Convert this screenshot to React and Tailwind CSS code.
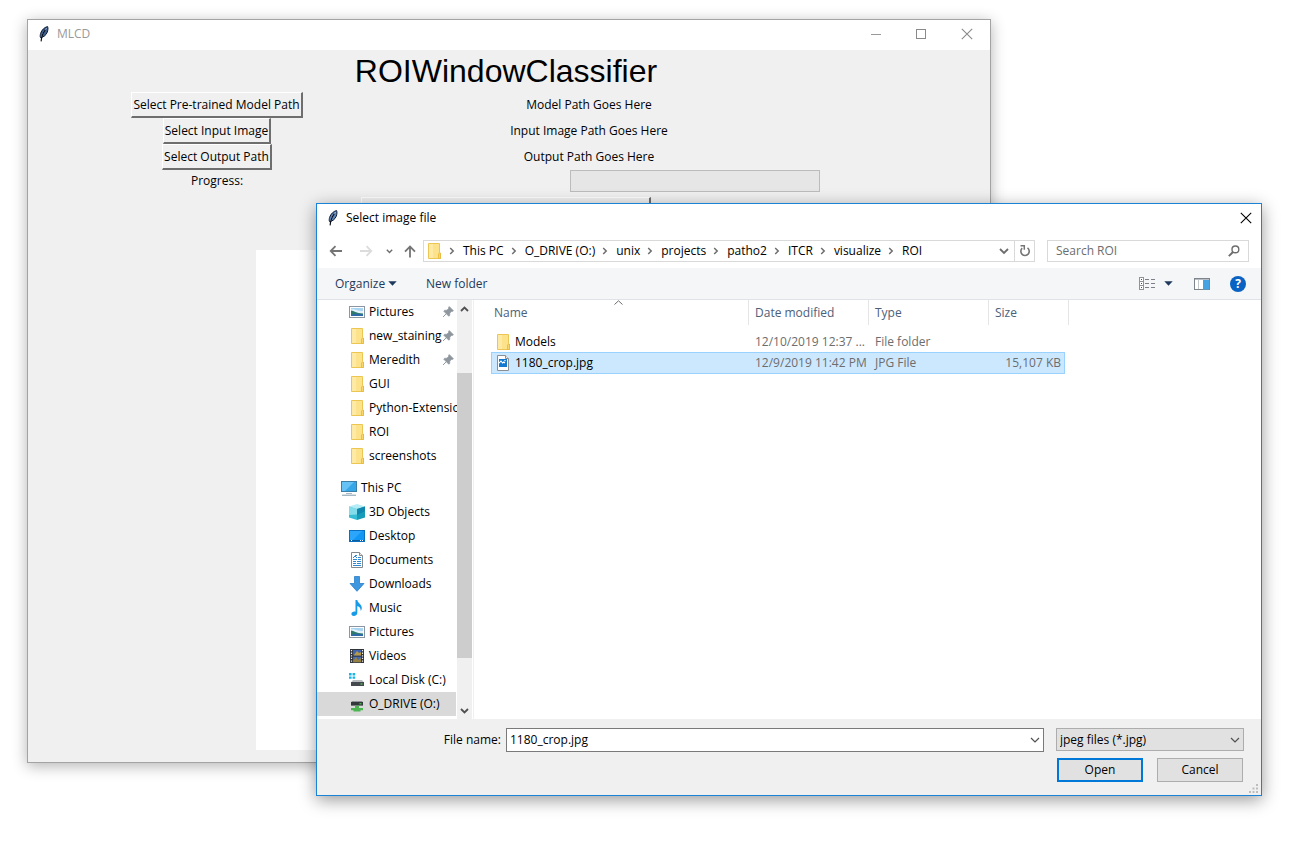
import React from "react";

function Feather({ active }) {
  return (
    <svg width="12" height="16" viewBox="0 0 12 16" className="shrink-0" aria-hidden="true">
      <path d="M9.6 0.6C6.6 1.2 3.6 4 2.6 7.4C2.2 9 2 10.4 2.5 11.6C5 11.4 8 9.4 9.2 6.4C10 4.2 10.2 2 9.6 0.6Z" fill={active ? "#5d86bd" : "#41618f"} stroke="#0c1a33" strokeWidth="1" />
      <path d="M8.6 2.2C6 5 4.6 8 3.6 11" stroke="#c3d6ee" strokeWidth="0.8" fill="none" />
      <path d="M7.4 3.6C5.2 6.6 3.4 10.4 3.1 15.4" stroke="#050b18" strokeWidth="1.1" fill="none" />
    </svg>
  );
}

function Folder() {
  return (
    <svg width="16" height="16" viewBox="0 0 16 16" className="shrink-0" aria-hidden="true">
      <path d="M2.5 0.5H13.5V9.5L14.5 10.5V15.5H2.5Z" fill="#fde28c" stroke="#ecc653" />
      <path d="M3 1H7V15H3Z" fill="#fee9a5" />
      <path d="M12.5 15.5V11L13.5 10H14.5V15.5Z" fill="#fbd669" stroke="#e3b73c" strokeWidth="0.8" />
    </svg>
  );
}

function PicturesIcon() {
  return (
    <svg width="16" height="16" viewBox="0 0 16 16" className="shrink-0" aria-hidden="true">
      <rect x="0.5" y="2.5" width="15" height="11" fill="#fff" stroke="#8b96a3" />
      <rect x="2" y="4" width="12" height="4" fill="#a9d4f2" />
      <path d="M2 5.5C5 4.5 7 7 14 7V10H2Z" fill="#e5f3fb" />
      <path d="M2 6.5C5 7 7 9 14 9.5V12H2Z" fill="#2f7a6c" />
      <path d="M2 10.5C6 9.5 10 9.5 14 10.5V12H2Z" fill="#2e6ba6" />
    </svg>
  );
}

function ThisPcIcon() {
  return (
    <svg width="16" height="16" viewBox="0 0 16 16" className="shrink-0" aria-hidden="true">
      <rect x="0.5" y="1.5" width="15" height="10" fill="#35a7e8" stroke="#3b7ea8" />
      <path d="M1 2H13L4 11H1Z" fill="#66c2f4" />
      <path d="M5 13.5H11" stroke="#a8b9c5" />
      <path d="M1 15.2H15" stroke="#7d98aa" />
    </svg>
  );
}

function CubeIcon() {
  return (
    <svg width="16" height="16" viewBox="0 0 16 16" className="shrink-0" aria-hidden="true">
      <path d="M0 2.6L8 0L16 2.6L8 5Z" fill="#b4edf5" />
      <path d="M0 2.6L8 5V16L0 13.4Z" fill="#35bdd4" />
      <path d="M8 5L16 2.6V13.4L8 16Z" fill="#169bb8" />
      <path d="M0 2.6L8 5V10.5L0 11Z" fill="#83dcea" />
      <path d="M8 5L16 2.6V7L8 11Z" fill="#0f86ad" />
    </svg>
  );
}

function DesktopIcon() {
  return (
    <svg width="16" height="16" viewBox="0 0 16 16" className="shrink-0" aria-hidden="true">
      <rect x="0.5" y="2.5" width="15" height="11" fill="#1296f3" stroke="#0b6fc0" />
      <path d="M1 3H13L4 12H1Z" fill="#2ba6fb" />
      <path d="M1 12.5H15" stroke="#0a5ca3" />
      <path d="M2 12.5H3M11 12.5H12M13 12.5H14" stroke="#fff" />
    </svg>
  );
}

function DocumentsIcon() {
  return (
    <svg width="16" height="16" viewBox="0 0 16 16" className="shrink-0" aria-hidden="true">
      <path d="M2.5 0.5H10.5L13.5 3.5V15.5H2.5Z" fill="#fff" stroke="#84898e" />
      <path d="M10.5 0.5V3.5H13.5" fill="#e8e8e8" stroke="#84898e" />
      <path d="M4 5.5H5M6 3.5H8M5 4.5H7M7 5.5H8M9 5.5H12M4 7.5H8M9 7.5H12M4 9.5H7M8 9.5H12M4 11.5H7M8 11.5H12M4 13.5H12" stroke="#2f88d4" />
    </svg>
  );
}

function DownloadsIcon() {
  return (
    <svg width="16" height="16" viewBox="0 0 16 16" className="shrink-0" aria-hidden="true">
      <path d="M5.5 0.5H10.5V7.5H15L8 15.3L1 7.5H5.5Z" fill="#3c96e0" stroke="#2a7fc8" strokeWidth="0.8" />
    </svg>
  );
}

function MusicIcon() {
  return (
    <svg width="16" height="16" viewBox="0 0 16 16" className="shrink-0" aria-hidden="true">
      <path d="M6.5 0H8.3C8.5 3 12.8 4 12.8 8C12.8 9.2 12.3 10.2 11.6 11C12 8.4 10.6 6.6 8.3 6V13C8.3 14.8 6.6 15.9 4.8 15.9C3.3 15.9 2.3 15 2.4 13.8C2.5 12.3 4.4 11.2 6.5 11.7Z" fill="#179be8" />
    </svg>
  );
}

function VideosIcon() {
  return (
    <svg width="16" height="16" viewBox="0 0 16 16" className="shrink-0" aria-hidden="true">
      <rect x="1" y="1" width="14" height="14" fill="#30343b" />
      <path d="M2.5 2V15M13.5 2V15" stroke="#e9ecef" strokeWidth="1.2" strokeDasharray="1.3 1.3" />
      <rect x="4" y="2" width="8" height="5.5" fill="#3f64ad" />
      <path d="M5 7L8 3L10 5L12 4V7.5H5Z" fill="#b79a49" />
      <rect x="4" y="8.7" width="8" height="5.5" fill="#4469b5" />
      <path d="M4 13L7 9L9 12L12 10V14.2H4Z" fill="#96803f" />
    </svg>
  );
}

function LocalDiskIcon() {
  return (
    <svg width="16" height="16" viewBox="0 0 16 16" className="shrink-0" aria-hidden="true">
      <path d="M0 1H2.6V3.4H0ZM3.6 1H6.2V3.4H3.6ZM0 4.4H2.6V6.8H0ZM3.6 4.4H6.2V6.8H3.6Z" fill="#19b3e6" />
      <path d="M4 8H13L15 10.5H2Z" fill="#b9bcbf" />
      <rect x="2" y="10" width="13" height="4" fill="#44494d" />
      <rect x="11.5" y="11.5" width="2" height="1" fill="#58e05e" />
    </svg>
  );
}

function NetworkDriveIcon() {
  return (
    <svg width="16" height="16" viewBox="0 0 16 16" className="shrink-0" aria-hidden="true">
      <path d="M3 5H13L14 6.5H2Z" fill="#8e9295" />
      <rect x="2" y="6" width="12" height="3.6" fill="#33383b" />
      <rect x="10.5" y="7.3" width="2" height="1" fill="#58e05e" />
      <path d="M6 9.8H10V12H14V14.2H11.5V15.6H4.5V14.2H2V12H6Z" fill="#4cb552" />
    </svg>
  );
}

function ImageFileIcon() {
  return (
    <svg width="14" height="16" viewBox="0 0 14 16" className="shrink-0" aria-hidden="true">
      <path d="M1.5 0.5H9.5L12.5 3.5V15.5H1.5Z" fill="#fff" stroke="#8b8f94" />
      <path d="M9.5 0.5V3.5H12.5" fill="#eee" stroke="#8b8f94" />
      <rect x="3" y="4" width="8" height="8" fill="#1478d0" />
      <path d="M3 8.2L5 6L6.6 8L7.8 7L9 8" stroke="#fff" strokeWidth="1.1" fill="none" />
      <rect x="8.4" y="5" width="1.2" height="1.2" fill="#fff" />
    </svg>
  );
}

function PinIcon() {
  return (
    <svg width="12" height="12" viewBox="0 0 12 12" className="shrink-0" aria-hidden="true">
      <path d="M7.2 0.6L11.4 4.8L10.2 5.4L9.2 5.4L7.8 7.2L7.6 9.6L6.8 10.2L4.3 7.7L1 11L4.3 7.7L1.8 5.2L2.4 4.4L4.8 4.2L6.6 2.8V1.8Z" fill="#8f979e" stroke="#8f979e" strokeWidth="0.8" />
    </svg>
  );
}

function Chevron({ className = "", d = "M1 1L5 5L9 1", w = 10, h = 6, stroke = 1.2 }) {
  return (
    <svg width={w} height={h} viewBox={`0 0 ${w} ${h}`} className={className} aria-hidden="true">
      <path d={d} fill="none" stroke="currentColor" strokeWidth={stroke} />
    </svg>
  );
}

function CloseIcon() {
  return (
    <svg width="12" height="12" viewBox="0 0 12 12" aria-hidden="true">
      <path d="M0.8 0.8L11.2 11.2M11.2 0.8L0.8 11.2" stroke="currentColor" strokeWidth="1.1" />
    </svg>
  );
}

function TkButton({ children }) {
  return (
    <button className="h-[26px] justify-self-center whitespace-nowrap border-t border-l border-r-2 border-b-2 border-t-white border-l-white border-r-[#6e6e6e] border-b-[#6e6e6e] bg-[#f0f0f0] px-px">
      {children}
    </button>
  );
}

function MainWindow() {
  return (
    <section aria-label="MLCD" className="absolute top-[19px] right-[299px] left-[27px] border border-[#a3a3a3] bg-[#f0f0f0] shadow-[0_3px_14px_rgba(0,0,0,0.3)]">
      <header className="flex h-[30px] items-center bg-white pb-0.5 pl-2.5 text-[#999]">
        <Feather />
        <span className="ml-[7px] flex-1">MLCD</span>
        <button aria-label="Minimize" className="grid h-full w-[46px] place-items-center">
          <svg width="12" height="12" viewBox="0 0 12 12" aria-hidden="true"><path d="M1 6.5H11" stroke="#999" /></svg>
        </button>
        <button aria-label="Maximize" className="grid h-full w-[45px] place-items-center">
          <svg width="12" height="12" viewBox="0 0 12 12" aria-hidden="true"><rect x="0.5" y="1.5" width="9" height="9" fill="none" stroke="#8a8a8a" /></svg>
        </button>
        <button aria-label="Close" className="grid h-full w-[46px] place-items-center text-[#8a8a8a]">
          <CloseIcon />
        </button>
      </header>
      <div className="grid grid-cols-[378fr_366fr_212fr] items-center pr-1.5 pb-3">
        <h1 className="col-span-3 h-[42px] text-center font-['Liberation_Sans',sans-serif] text-[32px] leading-[42px]">ROIWindowClassifier</h1>
        <TkButton>Select Pre-trained Model Path</TkButton>
        <p className="text-center">Model Path Goes Here</p>
        <span />
        <TkButton>Select Input Image</TkButton>
        <p className="text-center">Input Image Path Goes Here</p>
        <span />
        <TkButton>Select Output Path</TkButton>
        <p className="text-center">Output Path Goes Here</p>
        <span />
        <p className="text-center">Progress:</p>
        <div role="progressbar" aria-label="Progress" aria-valuenow={0} className="col-span-2 h-[22px] w-[250px] justify-self-center border border-[#bcbcbc] bg-[#e6e6e6]" />
        <button aria-label="Run" className="col-span-3 mt-[5px] mb-[27px] h-[26px] w-[290px] justify-self-center border-t border-l border-r-2 border-b-2 border-t-white border-l-white border-r-[#6e6e6e] border-b-[#6e6e6e]" />
        <div className="col-span-3 h-[500px] w-[500px] justify-self-center bg-white" />
      </div>
    </section>
  );
}

const crumbs = ["This PC", "O_DRIVE (O:)", "unix", "projects", "patho2", "ITCR", "visualize", "ROI"];

function NavBar() {
  return (
    <div className="flex h-[35px] items-center pt-px pr-3 pl-3 text-[#6d6d6d]">
      <button aria-label="Back" className="w-[15px]">
        <svg width="14" height="12" viewBox="0 0 14 12" aria-hidden="true"><path d="M13 6H2M6.5 1.2L1.7 6L6.5 10.8" fill="none" stroke="#747474" strokeWidth="1.8" /></svg>
      </button>
      <button aria-label="Forward" className="ml-[15px] w-[15px]">
        <svg width="14" height="12" viewBox="0 0 14 12" aria-hidden="true"><path d="M1 6H12M7.5 1.2L12.3 6L7.5 10.8" fill="none" stroke="#dcdcdc" strokeWidth="1.8" /></svg>
      </button>
      <button aria-label="Recent locations" className="ml-3 w-2">
        <Chevron w={7} h={5} d="M0.8 0.8L3.5 3.5L6.2 0.8" stroke={1.4} />
      </button>
      <button aria-label="Up" className="ml-[10px] w-[13px]">
        <svg width="12" height="13" viewBox="0 0 12 13" aria-hidden="true"><path d="M6 12.5V2M1 6.6L6 1.6L11 6.6" fill="none" stroke="#747474" strokeWidth="1.8" /></svg>
      </button>
      <div className="ml-[6px] flex h-[22px] flex-1 items-stretch border border-[#d9d9d9]">
        <nav aria-label="Address" className="flex flex-1 items-center pl-0.5 text-black">
          <Folder />
          {crumbs.map((c) => (
            <React.Fragment key={c}>
              <Chevron className="mr-2 ml-[7px] shrink-0 text-[#6d6d6d]" w={6} h={8} d="M1.2 1L4.2 4L1.2 7" stroke={1.5} />
              <button className="whitespace-nowrap">{c}</button>
            </React.Fragment>
          ))}
        </nav>
        <button aria-label="Previous locations" className="grid w-[20px] place-items-center">
          <Chevron w={10} h={7} d="M1 1L5 5L9 1" stroke={1.8} />
        </button>
        <button aria-label="Refresh" className="grid w-[20px] place-items-center border-l border-[#d9d9d9]">
          <svg width="12" height="12" viewBox="0 0 12 12" aria-hidden="true">
            <path d="M3.2 3.2A4.2 4.2 0 1 0 8.5 2.9" fill="none" stroke="#747474" strokeWidth="1.6" />
            <path d="M1.5 0.8H5.3V4.8" fill="none" stroke="#747474" strokeWidth="1.5" />
          </svg>
        </button>
      </div>
      <div className="ml-3 flex h-[22px] w-[202px] items-center border border-[#d9d9d9] pr-2 pl-2">
        <input aria-label="Search ROI" placeholder="Search ROI" className="min-w-0 flex-1 bg-transparent outline-none placeholder:text-[#6d6d6d]" />
        <svg width="12" height="12" viewBox="0 0 12 12" aria-hidden="true">
          <circle cx="7.4" cy="4.4" r="3.4" fill="none" stroke="#6d6d6d" strokeWidth="1.4" />
          <path d="M5 7L0.8 11.2" stroke="#6d6d6d" strokeWidth="1.9" />
        </svg>
      </div>
    </div>
  );
}

function Toolbar() {
  return (
    <div className="flex h-8 items-center border-b border-[#dfe3e8] bg-[#f5f6f7] pr-[15px] pl-[18px] text-[#1e395b]">
      <button className="flex w-[91px] items-center gap-[3px]">
        Organize
        <svg width="9" height="5" viewBox="0 0 9 5" aria-hidden="true"><path d="M0.3 0.3H8.7L4.5 4.8Z" fill="#1e395b" /></svg>
      </button>
      <button>New folder</button>
      <button aria-label="Change your view" className="ml-auto flex items-center gap-2">
        <svg width="17" height="13" viewBox="0 0 17 13" aria-hidden="true">
          <rect x="0.5" y="0.5" width="4" height="12" fill="#fff" stroke="#8d9399" />
          <path d="M1 4.5H4M1 8.5H4" stroke="#8d9399" />
          <path d="M2 2.5H3M2 6.5H3M2 10.5H3" stroke="#4a4f55" />
          <path d="M6 2.5H10M12 2.5H16M6 6.5H10M12 6.5H16M6 10.5H10M12 10.5H16" stroke="#7b8187" />
        </svg>
        <svg width="9" height="5" viewBox="0 0 9 5" aria-hidden="true"><path d="M0.3 0.3H8.7L4.5 4.8Z" fill="#1e395b" /></svg>
      </button>
      <button aria-label="Preview pane" className="ml-[21px]">
        <svg width="16" height="12" viewBox="0 0 16 12" aria-hidden="true">
          <rect x="0.5" y="0.5" width="15" height="11" fill="#fff" stroke="#7d848c" />
          <path d="M1 1.5H15" stroke="#b9bec4" />
          <path d="M4.5 2V11" stroke="#c3c8cd" />
          <rect x="9" y="2" width="6" height="9.5" fill="#45a3e3" />
        </svg>
      </button>
      <button aria-label="Help" className="ml-5 grid size-4 place-items-center rounded-full bg-[#0a63c2] font-bold text-white">?</button>
    </div>
  );
}

const quick = [
  ["Pictures", PicturesIcon, true],
  ["new_staining", Folder, true],
  ["Meredith", Folder, true],
  ["GUI", Folder],
  ["Python-Extensio", Folder],
  ["ROI", Folder],
  ["screenshots", Folder],
];

const places = [
  ["3D Objects", CubeIcon],
  ["Desktop", DesktopIcon],
  ["Documents", DocumentsIcon],
  ["Downloads", DownloadsIcon],
  ["Music", MusicIcon],
  ["Pictures", PicturesIcon],
  ["Videos", VideosIcon],
  ["Local Disk (C:)", LocalDiskIcon],
  ["O_DRIVE (O:)", NetworkDriveIcon],
];

function SideItem({ label, Icon, pinned, selected, root }) {
  return (
    <li className={selected ? "bg-[#d9d9d9]" : ""}>
      <button className={`flex h-6 w-full items-center gap-1 text-left ${root ? "pl-6" : "pl-8"}`}>
        <Icon />
        <span className="min-w-0 flex-1 whitespace-nowrap">{label}</span>
        {pinned && <span className="mr-0.5"><PinIcon /></span>}
      </button>
    </li>
  );
}

function Sidebar() {
  return (
    <div className="flex w-[157px] shrink-0 border-r border-[#f0f0f0]">
      <nav aria-label="Folders" className="w-[139px] pb-[3px]">
        <ul>
          {quick.map(([label, Icon, pinned]) => (
            <SideItem key={label} label={label} Icon={Icon} pinned={pinned} />
          ))}
        </ul>
        <ul className="mt-2">
          <SideItem label="This PC" Icon={ThisPcIcon} root />
          {places.map(([label, Icon]) => (
            <SideItem key={label} label={label} Icon={Icon} selected={label.startsWith("O_")} />
          ))}
        </ul>
      </nav>
      <div className="ml-px flex w-[15px] flex-col items-center bg-[#f0f0f0] text-[#505050]">
        <div className="grid h-[17px] place-items-center"><Chevron w={9} h={6} d="M1 5L4.5 1.5L8 5" stroke={1.8} /></div>
        <div className="mt-14 w-full flex-1 bg-[#cdcdcd]" />
        <div className="mt-[44px] grid h-[17px] place-items-center"><Chevron w={9} h={6} d="M1 1L4.5 4.5L8 1" stroke={1.8} /></div>
      </div>
    </div>
  );
}

function FileList() {
  const th = "h-[25px] border-r border-[#e5e5e5] pl-1.5 text-left font-normal";
  return (
    <div className="relative flex-1 pl-[17px]">
      <span className="absolute top-0 left-[140px] text-[#6d6d6d]"><Chevron w={9} h={5} d="M0.5 4.5L4.5 0.8L8.5 4.5" stroke={1} /></span>
      <table className="w-[578px] table-fixed border-separate border-spacing-0">
        <thead>
          <tr className="text-[#4c607a]">
            <th className="h-[25px] w-[258px] border-r border-[#e5e5e5] pl-[3px] text-left font-normal">Name</th>
            <th className={`${th} w-[120px]`}>Date modified</th>
            <th className={`${th} w-[120px]`}>Type</th>
            <th className="h-[25px] w-[76px] p-0 pl-1.5 text-left font-normal">Size</th>
            <th className="w-1 border-r border-[#e5e5e5] p-0" />
          </tr>
        </thead>
        <tbody className="text-[#6d6d6d]">
          <tr><td colSpan={5} className="h-[6px] p-0" /></tr>
          <tr>
            <td className="h-[21px] border-l border-transparent py-0 pl-[3px] text-black"><span className="flex items-center gap-1"><Folder />Models</span></td>
            <td className="pl-1.5 whitespace-nowrap">12/10/2019 12:37 ...</td>
            <td className="pl-1.5">File folder</td>
            <td className="p-0" />
            <td className="p-0" />
          </tr>
          <tr>
            <td className="h-[22px] border-y border-l border-[#99d1ff] bg-[#cce8ff] py-0 pl-1 text-black"><span className="flex items-center gap-[5px]"><ImageFileIcon />1180_crop.jpg</span></td>
            <td className="border-y border-[#99d1ff] bg-[#cce8ff] py-0 pl-1.5 whitespace-nowrap">12/9/2019 11:42 PM</td>
            <td className="border-y border-[#99d1ff] bg-[#cce8ff] py-0 pl-1.5">JPG File</td>
            <td className="border-y border-r border-[#99d1ff] bg-[#cce8ff] py-0 pr-[3px] text-right whitespace-nowrap">15,107 KB</td>
            <td className="p-0" />
          </tr>
        </tbody>
      </table>
    </div>
  );
}

function Footer() {
  return (
    <form className="relative bg-[#f0f0f0] pt-[9px] pb-[13px]" onSubmit={(e) => e.preventDefault()}>
      <div className="flex pr-[17px]">
        <label htmlFor="filename" className="w-[184px] text-right leading-6">File name:</label>
        <div className="ml-[5px] flex h-6 flex-1 items-center border border-[#7a7a7a] bg-white pr-[3px]">
          <input id="filename" defaultValue="1180_crop.jpg" className="min-w-0 flex-1 bg-transparent pl-[3px] outline-none" />
          <button type="button" aria-label="File name history" className="text-[#505050]"><Chevron /></button>
        </div>
        <div className="relative ml-3 w-[188px]">
          <select aria-label="File type" className="h-[23px] w-full appearance-none border border-[#adadad] bg-[#e1e1e1] pl-[3px]">
            <option>jpeg files (*.jpg)</option>
          </select>
          <Chevron className="pointer-events-none absolute top-[9px] right-1 text-[#505050]" />
        </div>
      </div>
      <div className="mt-1.5 flex justify-end gap-3.5 pr-[18px]">
        <button className="h-6 w-[86px] border-2 border-[#0078d7] bg-[#e1e1e1]">Open</button>
        <button type="button" className="h-6 w-[86px] border border-[#adadad] bg-[#e1e1e1]">Cancel</button>
      </div>
      <svg width="9" height="9" viewBox="0 0 9 9" className="absolute right-[3px] bottom-[2px]" aria-hidden="true">
        <path d="M7 0H9V2H7ZM3.5 3.5H5.5V5.5H3.5ZM7 3.5H9V5.5H7ZM0 7H2V9H0ZM3.5 7H5.5V9H3.5ZM7 7H9V9H7Z" fill="#bdbdbd" />
      </svg>
    </form>
  );
}

function FileDialog() {
  return (
    <section role="dialog" aria-label="Select image file" className="absolute top-[203px] right-[28px] left-[316px] border border-[#1883d7] bg-white shadow-[0_4px_16px_rgba(0,0,0,0.4)]">
      <header className="flex h-[29px] items-center pb-px pl-2.5">
        <Feather active />
        <h2 className="ml-[7px] flex-1">Select image file</h2>
        <button aria-label="Close" className="mr-[9px]"><CloseIcon /></button>
      </header>
      <NavBar />
      <Toolbar />
      <div className="flex">
        <Sidebar />
        <FileList />
      </div>
      <Footer />
    </section>
  );
}

export default function App() {
  return (
    <main className="relative min-h-screen overflow-hidden bg-white font-['Open_Sans',sans-serif] text-xs text-black">
      <MainWindow />
      <FileDialog />
    </main>
  );
}
